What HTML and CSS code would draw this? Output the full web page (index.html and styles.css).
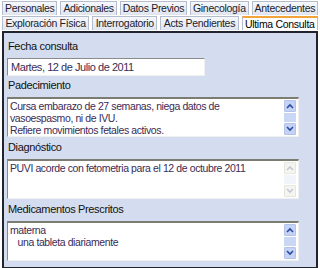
FILE: index.html
```html
<!DOCTYPE html>
<html>

<head>
    <meta name="viewport" content="width=device-width, initial-scale=1">
    <link rel="stylesheet" href="styles.css">
</head>

<body>

    <div class="tabs">
        <div class="tab-row">
            <div class="tab">Personales</div>
            <div class="tab">Adicionales</div>
            <div class="tab">Datos Previos</div>
            <div class="tab">Ginecología</div>
            <div class="tab">Antecedentes</div>
        </div>
        <div class="tab-row">
            <div class="tab">Exploración Física</div>
            <div class="tab">Interrogatorio</div>
            <div class="tab">Acts Pendientes</div>
            <div class="tab active">Ultima Consulta</div>
        </div>
    </div>

    <div class="panel">
        <label class="field-label">Fecha consulta</label>
        <div class="input">Martes, 12 de Julio de 2011</div>

        <label class="field-label">Padecimiento</label>
        <div class="textarea">
            <div class="text">Cursa embarazo de 27 semanas, niega datos de<br>vasoespasmo, ni de IVU.<br>Refiere movimientos fetales activos.</div>
            <div class="scroll">
                <div class="btn"><svg width="8" height="6" viewBox="0 0 8 6"><polyline points="1,5 4,2 7,5" /></svg></div>
                <div class="track"><div class="thumb"></div></div>
                <div class="btn"><svg width="8" height="6" viewBox="0 0 8 6"><polyline points="1,1 4,4 7,1" /></svg></div>
            </div>
        </div>

        <label class="field-label">Diagnóstico</label>
        <div class="textarea">
            <div class="text">PUVI acorde con fetometria para el 12 de octubre 2011</div>
            <div class="scroll disabled">
                <div class="btn"><svg width="8" height="6" viewBox="0 0 8 6"><polyline points="1,5 4,2 7,5" /></svg></div>
                <div class="track"></div>
                <div class="btn"><svg width="8" height="6" viewBox="0 0 8 6"><polyline points="1,1 4,4 7,1" /></svg></div>
            </div>
        </div>

        <label class="field-label">Medicamentos Prescritos</label>
        <div class="textarea">
            <div class="text">materna<br>&nbsp;&nbsp;&nbsp;una tableta diariamente</div>
            <div class="scroll">
                <div class="btn"><svg width="8" height="6" viewBox="0 0 8 6"><polyline points="1,5 4,2 7,5" /></svg></div>
                <div class="track"><div class="thumb"></div></div>
                <div class="btn"><svg width="8" height="6" viewBox="0 0 8 6"><polyline points="1,1 4,4 7,1" /></svg></div>
            </div>
        </div>
    </div>

</body>

</html>
```

FILE: styles.css
```css
body {
    font-family: "Liberation Sans", Arial, sans-serif;
    font-size: 11px;
    background-color: #ffffff;
    margin: 0;
    padding: 1px 2px 0 2px;
    width: 316px;
    color: #000000;
}

/* Tab strip, two rows */
.tabs {
    display: flex;
    flex-direction: column;
}

.tab-row {
    display: flex;
    gap: 3px;
}

.tab {
    flex: 1 1 auto;
    min-width: 0;
    height: 14px;
    line-height: 13px;
    margin-bottom: 1px;
    padding: 0 2px;
    text-align: center;
    white-space: nowrap;
    font-size: 10.5px;
    letter-spacing: -0.3px;
    color: #1c1c2c;
    background: linear-gradient(#f6f8fc, #dfe5f0);
    border: 1px solid #b5bccc;
    border-bottom: none;
    box-sizing: border-box;
}

.tab.active {
    background: #ffffff;
    border-top: 2px solid #f2a43a;
    line-height: 12px;
    color: #000000;
}

/* Panel with the form */
.panel {
    background-color: #d4ddef;
    border: 2px solid #22252e;
    height: 230px;
    padding: 4px 17px 0 3px;
    display: flex;
    flex-direction: column;
}

.field-label {
    display: block;
    height: 17px;
    line-height: 17px;
    margin: 1px 0 3px 1px;
    font-size: 11px;
    letter-spacing: -0.35px;
    color: #111111;
}

.textarea + .field-label {
    margin-top: 2px;
}

.input {
    width: 198px;
    height: 18px;
    line-height: 16px;
    padding-left: 3px;
    background: #ffffff;
    border-top: 1px solid #8a8a8a;
    border-left: 1px solid #8a8a8a;
    border-right: 1px solid #f0f0f0;
    border-bottom: 1px solid #f0f0f0;
    box-sizing: border-box;
    color: #3b2b55;
    font-size: 11px;
    letter-spacing: -0.45px;
}

.textarea {
    display: flex;
    height: 40px;
    background: #ffffff;
    border-top: 2px solid #7c7c72;
    border-left: 1px solid #8a8a8a;
    border-right: 1px solid #f0f0f0;
    border-bottom: 1px solid #f0f0f0;
    box-sizing: border-box;
}

.text {
    flex: 1;
    padding: 1px 2px;
    line-height: 12px;
    color: #3b2b55;
    font-size: 10.5px;
    letter-spacing: -0.4px;
    white-space: nowrap;
    overflow: hidden;
}

/* Fake XP style scrollbar */
.scroll {
    width: 12px;
    margin: 1px 2px 1px 0;
    display: flex;
    flex-direction: column;
    gap: 1px;
}

.btn {
    height: 12px;
    display: flex;
    align-items: center;
    justify-content: center;
    background: #c3d2f5;
    border: 1px solid #b4c2e8;
    border-radius: 1px;
    box-sizing: border-box;
}

.btn polyline {
    fill: none;
    stroke: #2c4aa0;
    stroke-width: 1.6;
}

.track {
    flex: 1;
    background: #f2f4fb;
    display: flex;
    justify-content: center;
}

.thumb {
    width: 12px;
    background: #c9d6f4;
}

.scroll.disabled .btn {
    background: #f5f5f0;
    border-color: #e6e6e0;
}

.scroll.disabled .btn polyline {
    stroke: #c4c8d0;
}
```
